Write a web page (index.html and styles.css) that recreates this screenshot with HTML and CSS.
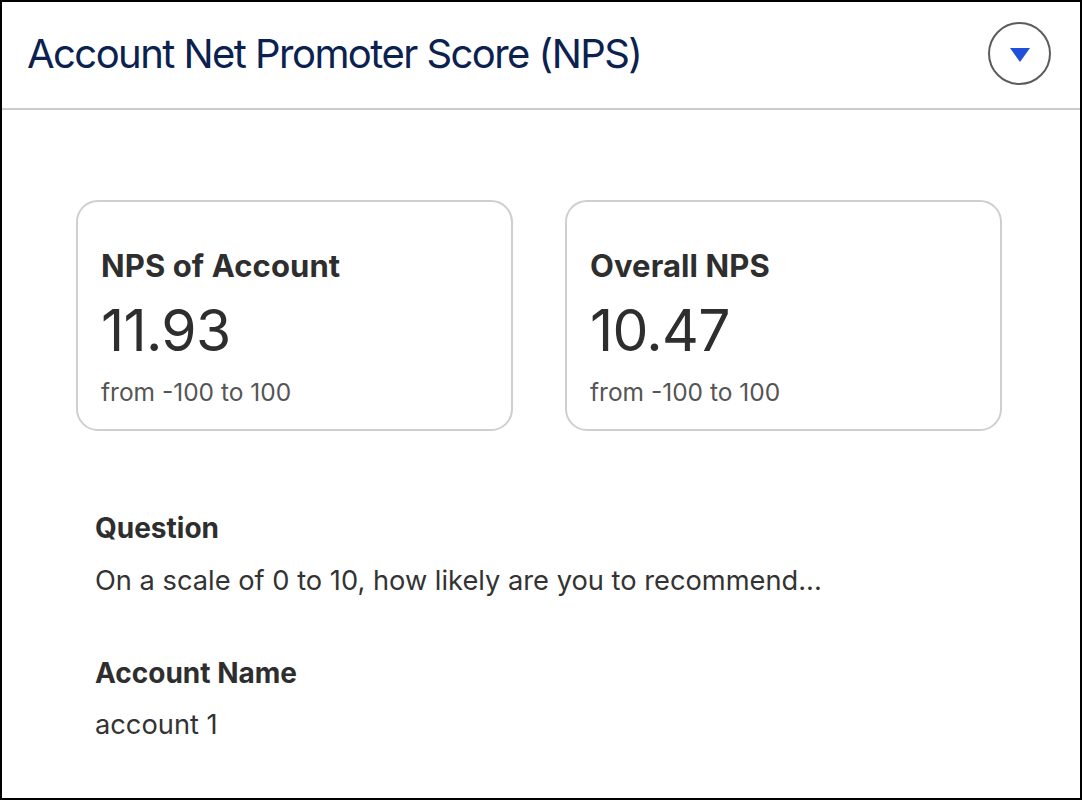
FILE: index.html
```html
<!DOCTYPE html>
<html>
	<head>
		<title>Account NPS</title>
		<link rel="stylesheet" href="styles.css">
	</head>
	<body>
		<div class="panel">
			<div class="panel-header">
				<h1>Account Net Promoter Score (NPS)</h1>
				<button class="toggle" aria-label="Toggle">
					<svg width="20" height="14" viewBox="0 0 20 14"><path d="M0 0 H20 L10 14 Z" fill="#2150d8"/></svg>
				</button>
			</div>
			<div class="panel-body">
				<div class="cards">
					<div class="card">
						<div class="card-title">NPS of Account</div>
						<div class="card-value">11.93</div>
						<div class="card-note">from -100 to 100</div>
					</div>
					<div class="card">
						<div class="card-title">Overall NPS</div>
						<div class="card-value">10.47</div>
						<div class="card-note">from -100 to 100</div>
					</div>
				</div>
				<div class="field">
					<div class="field-label">Question</div>
					<div class="field-value">On a scale of 0 to 10, how likely are you to recommend...</div>
				</div>
				<div class="field">
					<div class="field-label">Account Name</div>
					<div class="field-value">account 1</div>
				</div>
			</div>
		</div>
	</body>
</html>
```

FILE: styles.css
```css
* {
	margin: 0; padding: 0;
	box-sizing: border-box;
}

body {
	font-family: "Inter", "Noto Sans", sans-serif;
	color: #2e2e2e;
	background: #fff;
}

.panel {
	width: 1082px;
	height: 800px;
	border: solid 2px #000;
	overflow: hidden;
}

.panel-header {
	height: 108px;
	display: flex;
	align-items: center;
	justify-content: space-between;
	padding: 0 29px 3px 25px;
	border-bottom: solid 2px #cbcbcb;
}

h1 {
	font-size: 40px;
	line-height: 48px;
	font-weight: 400;
	color: #0b2150;
	letter-spacing: -1.55px;
}

.toggle {
	width: 63px;
	height: 63px;
	border-radius: 50%;
	border: solid 2px #5c5c5c;
	background: #fff;
	display: flex;
	align-items: center;
	justify-content: center;
	padding-top: 2px;
	cursor: pointer;
}

.panel-body {
	padding: 90px 79px 0 74px;
}

.cards {
	display: grid;
	grid-template-columns: 437px 437px;
	gap: 52px;
}

.card {
	height: 231px;
	border: solid 2px #cfcfcf;
	border-radius: 22px;
	padding: 44px 23px 0 23px;
}

.card-title {
	font-size: 31px;
	font-weight: 700;
	line-height: 40px;
	letter-spacing: 0.1px;
}

.card-value {
	font-size: 57px;
	line-height: 66px;
	margin-top: 12px;
	letter-spacing: -0.7px;
}

.card-note {
	font-size: 24.5px;
	line-height: 30px;
	color: #555;
	margin-top: 13px;
}

.field {
	padding-left: 19px;
	margin-top: 80px;
}

.field + .field {
	margin-top: 58px;
}

.field-label {
	font-size: 28px;
	font-weight: 700;
	line-height: 34px;
}

.field-value {
	font-size: 27.25px;
	line-height: 34px;
	margin-top: 19px;
	color: #333;
}

.field + .field .field-value {
	margin-top: 18px;
}
```
